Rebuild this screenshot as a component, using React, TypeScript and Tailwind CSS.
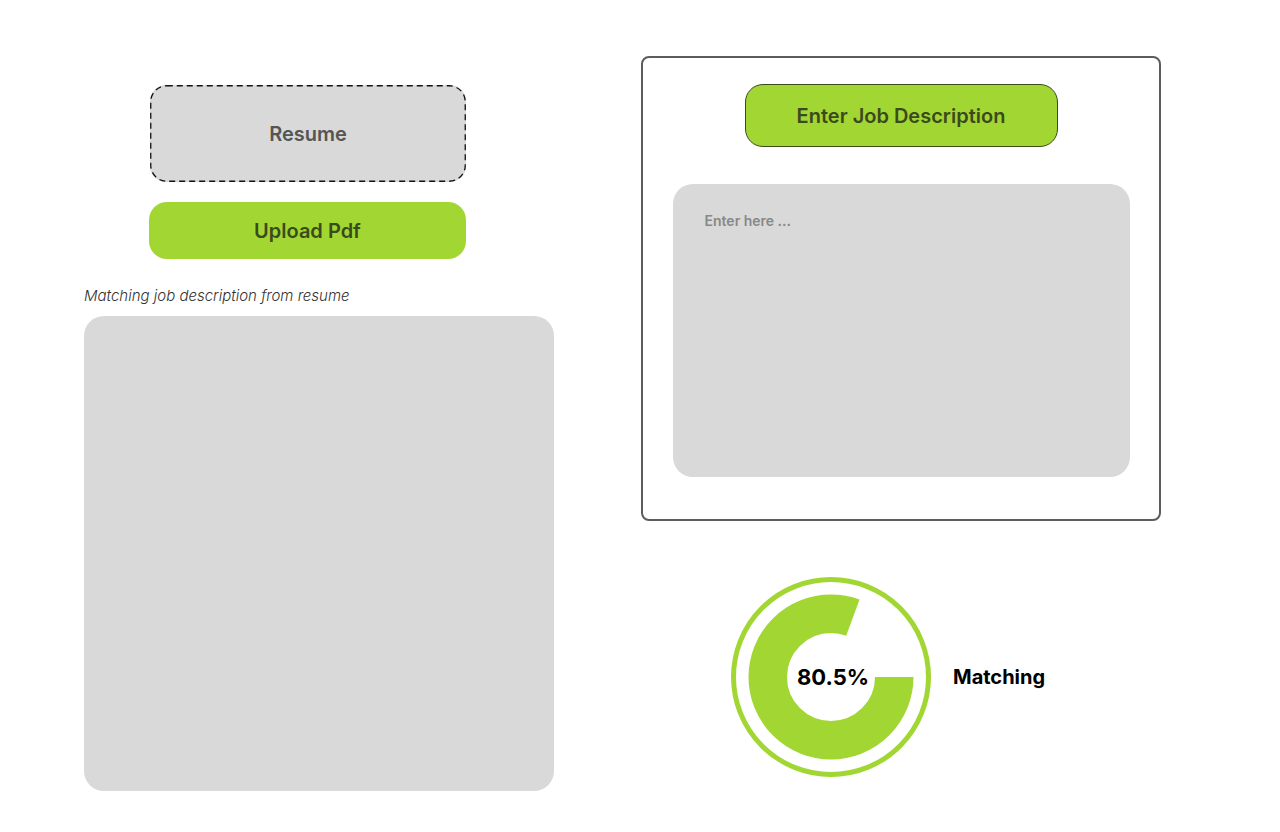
import { useState } from 'react';

const GREEN = '#a2d633';

function MatchRing({ percent }: { percent: number }) {
  const r = 63.25;
  const circ = 2 * Math.PI * r;
  const filled = (circ * percent) / 100;

  return (
    <div className="relative w-[200px] h-[200px]">
      <svg width="200" height="200" viewBox="0 0 200 200">
        <circle cx="100" cy="100" r="97.5" fill="none" stroke={GREEN} strokeWidth="5" />
        <circle
          cx="100"
          cy="100"
          r={r}
          fill="none"
          stroke={GREEN}
          strokeWidth="38.5"
          strokeDasharray={`${filled} ${circ}`}
        />
      </svg>
      <div className="absolute inset-0 flex items-center justify-center pl-[4px] text-[22px] font-bold text-black">
        {percent}%
      </div>
    </div>
  );
}

export default function App() {
  const [jobText, setJobText] = useState('');

  return (
    <div className="w-[1280px] h-[832px] bg-white flex font-['Inter',sans-serif] overflow-hidden">
      {/* left column */}
      <div className="ml-[84px] w-[470px] pt-[85px] flex flex-col">
        <div className="relative ml-[66px] w-[316px] h-[97px] rounded-[16px] bg-[#d9d9d9] flex items-center justify-center text-[20px] font-semibold text-[#555555]">
          {/* dashed outline drawn so dash length matches the mock */}
          <svg className="absolute inset-0" width="316" height="97">
            <rect
              x="0.75"
              y="0.75"
              width="314.5"
              height="95.5"
              rx="16"
              fill="none"
              stroke="#111"
              strokeWidth="1.3"
              strokeDasharray="6 4"
            />
          </svg>
          <span className="relative">Resume</span>
        </div>
        <button className="ml-[65px] mt-[20px] w-[317px] h-[57px] rounded-[18px] bg-[#a2d633] text-[20px] font-semibold text-[#3b4a1c]">
          Upload Pdf
        </button>
        <p className="mt-[28px] text-[15px] font-light italic text-[#333333] leading-[18px]">
          Matching job description from resume
        </p>
        <div className="mt-[11px] w-[470px] h-[475px] rounded-[20px] bg-[#d9d9d9]" />
      </div>

      {/* right column */}
      <div className="ml-[87px] pt-[56px] flex flex-col">
        <div className="w-[520px] h-[465px] rounded-[8px] border-2 border-[#5c5c5c] flex flex-col items-center">
          <button className="mt-[26px] w-[313px] h-[63px] rounded-[18px] border border-[#3b4a1c] bg-[#a2d633] text-[20px] font-semibold text-[#3b4a1c]">
            Enter Job Description
          </button>
          <textarea
            value={jobText}
            onChange={(e) => setJobText(e.target.value)}
            placeholder="Enter here ..."
            className="mt-[37px] w-[457px] h-[293px] rounded-[20px] bg-[#d9d9d9] px-[32px] py-[26px] text-[14px] font-semibold text-[#555555] placeholder:text-[#888888] resize-none outline-none"
          />
        </div>

        <div className="mt-[56px] ml-[90px] flex items-center gap-[22px]">
          <MatchRing percent={80.5} />
          <span className="text-[20px] font-bold text-black">Matching</span>
        </div>
      </div>
    </div>
  );
}
